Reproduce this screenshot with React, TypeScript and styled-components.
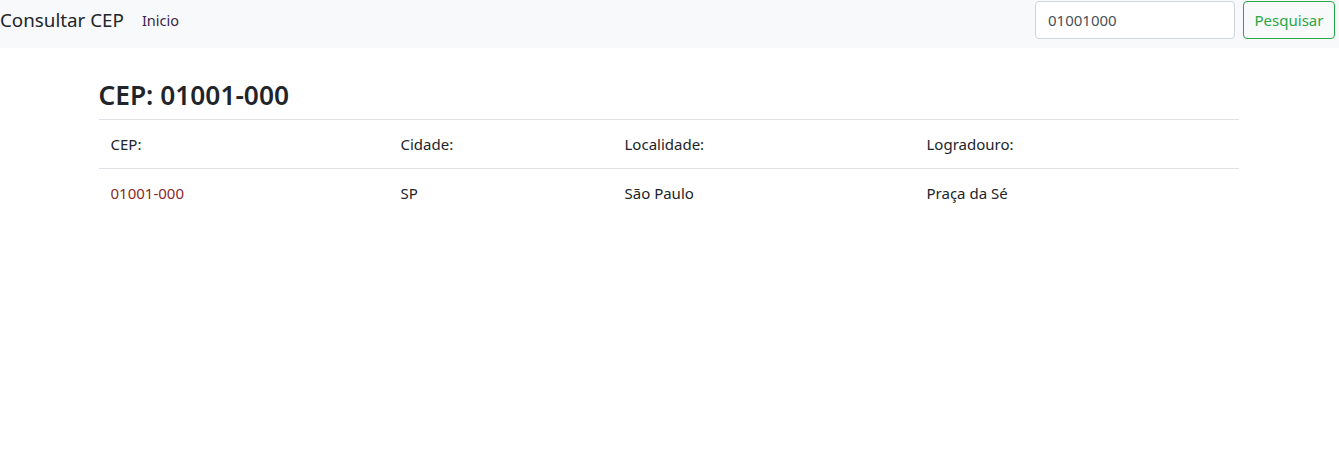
import React from "react";
import styled, { createGlobalStyle } from "styled-components";

const Global = createGlobalStyle`
  html, body { margin: 0; padding: 0; background: #fff; }
  body {
    font-family: "Segoe UI", "Noto Sans", "Open Sans", sans-serif;
    font-size: 15px;
    line-height: 24px;
    color: #212529;
  }
  * { box-sizing: border-box; }
`;

const NavBar = styled.nav`
  height: 48px;
  background: #f8f9fa;
  display: flex;
  align-items: flex-start;
  justify-content: space-between;
  padding: 1px 4px 0 0;
`;

const Left = styled.div`
  display: flex;
  align-items: center;
  height: 38px;
`;

const Brand = styled.a`
  font-size: 18.8px;
  line-height: 30px;
  color: #212529;
  text-decoration: none;
  margin-right: 18px;
`;

const NavLink = styled.a`
  font-size: 14.5px;
  color: #3b1f4a;
  text-decoration: none;
  margin-top: -1px;
`;

const SearchForm = styled.form`
  display: flex;
  gap: 8px;
`;

const Input = styled.input`
  width: 200px;
  height: 38px;
  padding: 6px 12px;
  font-family: inherit;
  font-size: 15px;
  color: #495057;
  border: 1px solid #ced4da;
  border-radius: 4px;
  background: #fff;
  outline: none;
`;

const Button = styled.button`
  height: 38px;
  width: 92px;
  padding: 6px 0;
  font-family: inherit;
  font-size: 15px;
  color: #28a745;
  background: transparent;
  border: 1px solid #28a745;
  border-radius: 4px;
`;

const Container = styled.main`
  width: 1140px;
  margin: 0 auto;
  padding-top: 32px;
  position: relative;
  left: -1px;
`;

const Title = styled.h3`
  margin: 0 0 7px 0;
  font-size: 26.3px;
  font-weight: 600;
  line-height: 1.2;
`;

const Table = styled.table`
  width: 100%;
  border-collapse: collapse;
`;

const Cell = styled.td<{ $w: number; $color?: string }>`
  width: ${(p) => p.$w}px;
  padding: 12px;
  border-top: 1px solid #dee2e6;
  vertical-align: top;
  font-size: 15px;
  line-height: 24px;
  color: ${(p) => p.$color || "#212529"};
`;

const widths = [290, 224, 302, 324];
const headers = ["CEP:", "Cidade:", "Localidade:", "Logradouro:"];
const values = ["01001-000", "SP", "São Paulo", "Praça da Sé"];

export default function App() {
  return (
    <>
      <Global />
      <NavBar>
        <Left>
          <Brand href="#">Consultar CEP</Brand>
          <NavLink href="#">Inicio</NavLink>
        </Left>
        <SearchForm onSubmit={(e) => e.preventDefault()}>
          <Input defaultValue="01001000" />
          <Button type="submit">Pesquisar</Button>
        </SearchForm>
      </NavBar>
      <Container>
        <Title>CEP: 01001-000</Title>
        <Table>
          <tbody>
            <tr>
              {headers.map((h, i) => (
                <Cell key={h} $w={widths[i]}>{h}</Cell>
              ))}
            </tr>
            <tr>
              {values.map((v, i) => (
                <Cell key={v} $w={widths[i]} $color={i === 0 ? "#8a2b2b" : undefined}>{v}</Cell>
              ))}
            </tr>
          </tbody>
        </Table>
      </Container>
    </>
  );
}
